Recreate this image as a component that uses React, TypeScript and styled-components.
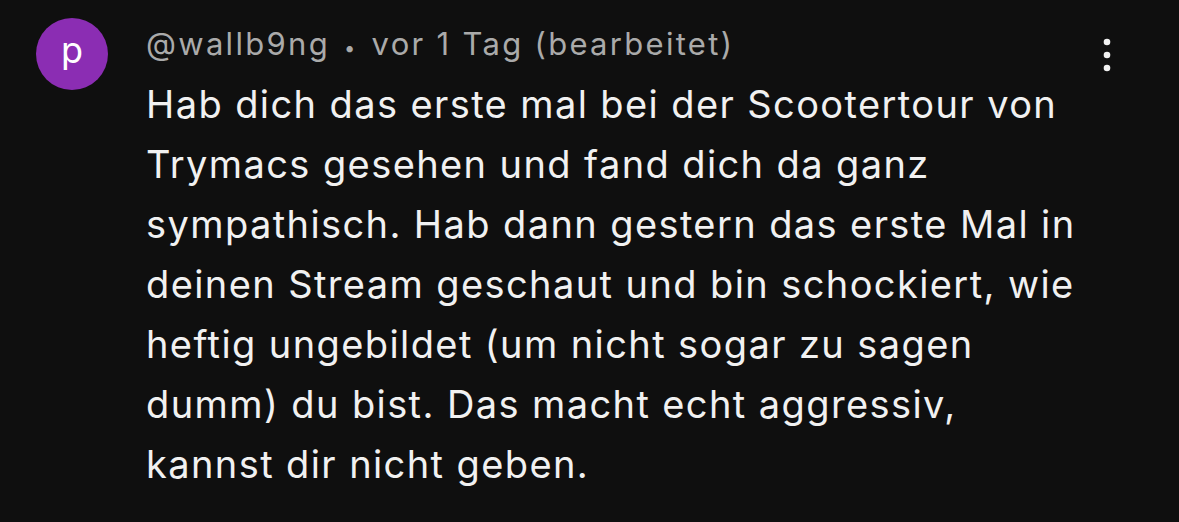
import React from "react";
import styled, { createGlobalStyle } from "styled-components";

const GlobalStyle = createGlobalStyle`
    html, body {
        margin: 0;
        padding: 0;
        background: #0f0f0f;
    }
    body {
        font-family: Inter, "Noto Sans", sans-serif;
        -webkit-font-smoothing: antialiased;
    }
`;

const lines = [
    "Hab dich das erste mal bei der Scootertour von",
    "Trymacs gesehen und fand dich da ganz",
    "sympathisch. Hab dann gestern das erste Mal in",
    "deinen Stream geschaut und bin schockiert, wie",
    "heftig ungebildet (um nicht sogar zu sagen",
    "dumm) du bist. Das macht echt aggressiv,",
    "kannst dir nicht geben.",
];

const App: React.FC = () => {
    return (
        <>
            <GlobalStyle />
            <Comment>
                <Avatar>p</Avatar>
                <Body>
                    <Header>
                        <Author>@wallb9ng</Author>
                        <Sep>•</Sep>
                        <span>vor 1 Tag (bearbeitet)</span>
                    </Header>
                    <Text>
                        {lines.map((l) => (
                            <Line key={l}>{l}</Line>
                        ))}
                    </Text>
                </Body>
                <MenuButton aria-label="Aktionen">
                    <svg width="8" height="34" viewBox="0 0 8 34">
                        <circle cx="4" cy="4" r="3.3" fill="#f1f1f1" />
                        <circle cx="4" cy="17" r="3.3" fill="#f1f1f1" />
                        <circle cx="4" cy="30" r="3.3" fill="#f1f1f1" />
                    </svg>
                </MenuButton>
            </Comment>
        </>
    );
};

const Comment = styled.div`
    width: 1179px;
    height: 522px;
    box-sizing: border-box;
    background: #0f0f0f;
    display: flex;
    align-items: flex-start;
    padding: 18px 0 0 36px;
    overflow: hidden;
`;

const Avatar = styled.div`
    flex: none;
    width: 72px;
    height: 72px;
    border-radius: 50%;
    background: #8b2db3;
    color: #fff;
    font-size: 36px;
    line-height: 64px;
    text-align: center;
    font-weight: 400;
`;

const Body = styled.div`
    flex: 1;
    margin-left: 38px;
    padding-top: 8px;
`;

const Header = styled.div`
    display: flex;
    align-items: baseline;
    gap: 14px;
    color: #aaaaaa;
    font-size: 31px;
    letter-spacing: 2.3px;
    line-height: 36px;
`;

const Author = styled.span``;

const Sep = styled.span`
    font-size: 20px;
`;

const Text = styled.div`
    margin-top: 8px;
    color: #f1f1f1;
    font-size: 38px;
    letter-spacing: 1.4px;
    line-height: 60px;
`;

const Line = styled.div`
    white-space: nowrap;
`;

const MenuButton = styled.button`
    flex: none;
    background: none;
    border: none;
    padding: 0;
    margin: 20px 68px 0 0;
    display: flex;
    cursor: pointer;
`;

export default App;
